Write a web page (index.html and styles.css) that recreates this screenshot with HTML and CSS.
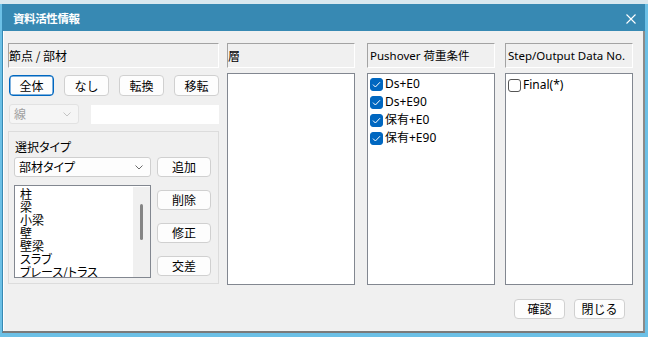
FILE: index.html
```html
<!DOCTYPE html>
<html lang="ja">
<head>
<meta charset="utf-8">
<title>資料活性情報</title>
<link rel="stylesheet" href="styles.css">
</head>
<body>
<div class="top-strip"></div>
<div class="window">
  <div class="titlebar">
    <span class="title">資料活性情報</span>
    <svg class="close" width="10" height="10" viewBox="0 0 10 10"><path d="M0.5 0.5 L9.5 9.5 M9.5 0.5 L0.5 9.5" stroke="#fff" stroke-width="1.1" fill="none"/></svg>
  </div>
  <div class="content">
    <div class="columns">
      <div class="col col-main">
        <div class="hdr">節点 / 部材</div>
        <div class="btn-row">
          <button class="btn btn-default">全体</button>
          <button class="btn">なし</button>
          <button class="btn">転換</button>
          <button class="btn">移転</button>
        </div>
        <div class="filter-row">
          <div class="combo combo-disabled">
            <span>線</span>
            <svg class="chev" width="8" height="5" viewBox="0 0 8 5"><path d="M0.5 0.5 L4 4 L7.5 0.5" stroke="#c4c4c4" stroke-width="1" fill="none"/></svg>
          </div>
          <div class="textbox"></div>
        </div>
        <div class="group">
          <div class="group-label">選択タイプ</div>
          <div class="group-body">
            <div class="group-left">
              <div class="combo combo-type">
                <span>部材タイプ</span>
                <svg class="chev" width="8" height="5" viewBox="0 0 8 5"><path d="M0.5 0.5 L4 4 L7.5 0.5" stroke="#6a6a6a" stroke-width="1" fill="none"/></svg>
              </div>
              <div class="listbox">
                <ul class="items">
                  <li>柱</li>
                  <li>梁</li>
                  <li>小梁</li>
                  <li>壁</li>
                  <li>壁梁</li>
                  <li>スラブ</li>
                  <li>ブレース/トラス</li>
                </ul>
                <div class="scrollbar"><div class="thumb"></div></div>
              </div>
            </div>
            <div class="group-right">
              <button class="btn btn-side">追加</button>
              <button class="btn btn-side">削除</button>
              <button class="btn btn-side">修正</button>
              <button class="btn btn-side">交差</button>
            </div>
          </div>
        </div>
      </div>
      <div class="col col-narrow col-layer">
        <div class="hdr">層</div>
        <div class="list"></div>
      </div>
      <div class="col col-narrow col-load">
        <div class="hdr hdr-latin">Pushover 荷重条件</div>
        <div class="list">
          <div class="chk-row"><span class="chk checked"><svg width="9" height="7" viewBox="0 0 9 7"><path d="M1 3.6 L3.4 6 L8 1.2" stroke="#fff" stroke-width="1" fill="none"/></svg></span><span class="chk-label">Ds+E0</span></div>
          <div class="chk-row"><span class="chk checked"><svg width="9" height="7" viewBox="0 0 9 7"><path d="M1 3.6 L3.4 6 L8 1.2" stroke="#fff" stroke-width="1" fill="none"/></svg></span><span class="chk-label">Ds+E90</span></div>
          <div class="chk-row"><span class="chk checked"><svg width="9" height="7" viewBox="0 0 9 7"><path d="M1 3.6 L3.4 6 L8 1.2" stroke="#fff" stroke-width="1" fill="none"/></svg></span><span class="chk-label">保有+E0</span></div>
          <div class="chk-row"><span class="chk checked"><svg width="9" height="7" viewBox="0 0 9 7"><path d="M1 3.6 L3.4 6 L8 1.2" stroke="#fff" stroke-width="1" fill="none"/></svg></span><span class="chk-label">保有+E90</span></div>
        </div>
      </div>
      <div class="col col-narrow col-step">
        <div class="hdr hdr-latin">Step/Output Data No.</div>
        <div class="list">
          <div class="chk-row chk-row-step"><span class="chk"></span><span class="chk-label">Final(*)</span></div>
        </div>
      </div>
    </div>
    <div class="footer">
      <button class="btn btn-foot">確認</button>
      <button class="btn btn-foot">閉じる</button>
    </div>
  </div>
</div>
</body>
</html>
```

FILE: styles.css
```css
* { box-sizing: border-box; }

html, body {
  margin: 0;
  padding: 0;
}

body {
  width: 648px;
  height: 337px;
  overflow: hidden;
  background: #6cc0e6;
  font-family: "Noto Sans CJK JP", "Noto Sans", sans-serif;
  font-feature-settings: "palt" 1;
  font-size: 12px;
  color: #000;
}

.top-strip {
  height: 4px;
  background: #d9e8ef;
}

.window {
  margin-left: 2px;
  width: 643px;
}

.titlebar {
  height: 27px;
  background: #3789b3;
  display: flex;
  align-items: center;
  padding-left: 11px;
  padding-right: 9px;
}

.title {
  color: #fff;
  font-weight: bold;
  font-size: 11.5px;
  letter-spacing: -0.4px;
  flex: 1;
  padding-top: 1px;
}

.close {
  display: block;
  margin-top: 2px;
}

.content {
  height: 302px;
  background: #f0f0f0;
  border-left: 1px solid #3789b3;
  border-right: 2px solid #8a8a8a;
  border-bottom: 2px solid #7a7a7a;
  padding: 12px 0 0 5px;
  box-shadow: inset 1px 0 0 #ffffff;
}

.columns {
  display: flex;
  align-items: flex-start;
}

.col-main { width: 211px; }
.col-narrow { width: 128px; }
.col-layer { margin-left: 8px; }
.col-load { margin-left: 12px; }
.col-step { margin-left: 10px; }

.hdr {
  height: 25px;
  border: 1px solid;
  border-color: #a3a3a3 #ffffff #ffffff #a3a3a3;
  display: flex;
  align-items: center;
  padding-left: 0;
  white-space: nowrap;
  line-height: 1;
}

.hdr-latin {
  font-family: "Noto Sans", "Noto Sans CJK JP", sans-serif;
  padding-left: 2px;
  font-size: 11.5px;
}

.btn {
  font-family: "Noto Sans CJK JP", sans-serif;
  font-size: 12px;
  background: #fdfdfd;
  border: 1px solid #d0d0d0;
  border-radius: 4px;
  color: #000;
  padding: 0;
  line-height: 1;
  display: flex;
  align-items: center;
  justify-content: center;
}

.btn-default {
  border-color: #0067c0;
  box-shadow: inset 0 0 0 0.5px #0067c0;
}

.btn-row {
  margin-top: 7px;
  padding-left: 1px;
  display: flex;
  justify-content: space-between;
}

.btn-row .btn {
  width: 45px;
  height: 21px;
}

.filter-row {
  margin-top: 8px;
  padding-left: 1px;
  display: flex;
  align-items: center;
  gap: 12px;
}

.combo {
  display: flex;
  align-items: center;
  justify-content: space-between;
  border: 1px solid #cfcfcf;
  border-radius: 3px;
  background: #fdfdfd;
  padding: 0 7px 0 4px;
  line-height: 1;
}

.combo-disabled {
  width: 70px;
  height: 20px;
  background: #f5f5f5;
  border-color: #e2e2e2;
  color: #a0a0a0;
}

.textbox {
  width: 128px;
  height: 19px;
  background: #fff;
}

.group {
  margin-top: 7px;
  height: 153px;
  border: 1px solid #dcdcdc;
  padding: 5px 7px 0 5px;
}

.group-label {
  height: 16px;
  line-height: 16px;
  padding-left: 1px;
  margin-top: 2px;
}

.group-body {
  margin-top: 2px;
  display: flex;
  gap: 6px;
}

.combo-type {
  width: 137px;
  height: 20px;
  padding-left: 4px;
}

.listbox {
  margin-top: 8px;
  width: 137px;
  height: 93px;
  border: 1px solid #828790;
  background: #fff;
  display: flex;
  overflow: hidden;
}

.items {
  list-style: none;
  margin: 0;
  padding: 1px 0 0 5px;
  flex: 1;
  line-height: 13px;
  white-space: nowrap;
}

.scrollbar {
  width: 17px;
  margin-top: 1px;
  background: #f0f0f0;
  display: flex;
  justify-content: center;
}

.thumb {
  margin-top: 17px;
  width: 3px;
  height: 36px;
  border-radius: 2px;
  background: #858585;
}

.group-right {
  display: flex;
  flex-direction: column;
  gap: 13px;
}

.btn-side {
  width: 54px;
  height: 20px;
}

.list {
  margin-top: 5px;
  height: 212px;
  border: 1px solid #828790;
  background: #fff;
  padding: 1px 0 0 2px;
}

.chk-row {
  height: 18px;
  display: flex;
  align-items: center;
  gap: 2px;
  white-space: nowrap;
}

.chk-row-step { margin-top: 1px; }

.chk {
  width: 13px;
  height: 13px;
  border-radius: 3px;
  border: 1px solid #555;
  background: #fff;
  display: flex;
  align-items: center;
  justify-content: center;
  flex: none;
}

.chk.checked {
  background: #0067c0;
  border-color: #0067c0;
}

.chk svg { display: block; }

.chk-label {
  font-family: "Noto Sans", "Noto Sans CJK JP", sans-serif;
  font-size: 12px;
  line-height: 1;
}

.footer {
  margin-top: 14px;
  padding-right: 18px;
  display: flex;
  justify-content: flex-end;
  gap: 9px;
}

.btn-foot {
  width: 51px;
  height: 20px;
}
```
